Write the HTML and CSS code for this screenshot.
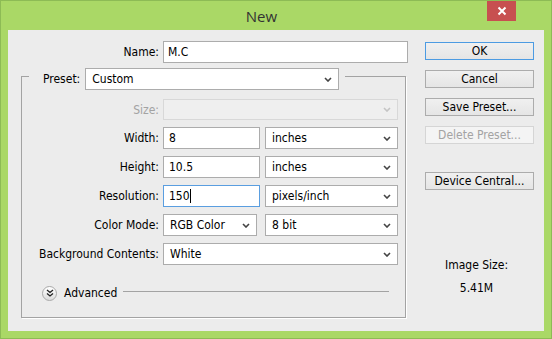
FILE: index.html
```html
<!DOCTYPE html>
<html>
<head>
    <meta name="viewport" content="width=device-width, initial-scale=1.0">
    <title>New</title>
    <link rel="stylesheet" href="styles.css">
</head>
<body>
    <div class="window">
        <div class="titlebar">
            <span class="title">New</span>
            <div class="close">
                <svg width="10" height="10" viewBox="0 0 10 10"><path d="M1.5 1.5 L8.5 8.5 M8.5 1.5 L1.5 8.5" stroke="#fff" stroke-width="2"/></svg>
            </div>
        </div>

        <div class="panel">
            <div class="main">
                <div class="row name-row">
                    <label>Name:</label>
                    <div class="field name">M.C</div>
                </div>

                <div class="group">
                    <div class="legend">
                        <label>Preset:</label>
                        <div class="select preset"><span>Custom</span><svg class="chev" width="8" height="5" viewBox="0 0 8 5"><path d="M1 1 L4 4 L7 1" fill="none" stroke="#444" stroke-width="1.6"/></svg></div>
                    </div>

                    <div class="row size-row">
                        <label class="disabled">Size:</label>
                        <div class="select full off"><span></span><svg class="chev" width="8" height="5" viewBox="0 0 8 5"><path d="M1 1 L4 4 L7 1" fill="none" stroke="#c4c4c4" stroke-width="1.6"/></svg></div>
                    </div>

                    <div class="row">
                        <label>Width:</label>
                        <div class="field small">8</div>
                        <div class="select unit"><span>inches</span><svg class="chev" width="8" height="5" viewBox="0 0 8 5"><path d="M1 1 L4 4 L7 1" fill="none" stroke="#444" stroke-width="1.6"/></svg></div>
                    </div>

                    <div class="row">
                        <label>Height:</label>
                        <div class="field small">10.5</div>
                        <div class="select unit"><span>inches</span><svg class="chev" width="8" height="5" viewBox="0 0 8 5"><path d="M1 1 L4 4 L7 1" fill="none" stroke="#444" stroke-width="1.6"/></svg></div>
                    </div>

                    <div class="row">
                        <label>Resolution:</label>
                        <div class="field small focus">150<span class="caret"></span></div>
                        <div class="select unit"><span>pixels/inch</span><svg class="chev" width="8" height="5" viewBox="0 0 8 5"><path d="M1 1 L4 4 L7 1" fill="none" stroke="#444" stroke-width="1.6"/></svg></div>
                    </div>

                    <div class="row">
                        <label>Color Mode:</label>
                        <div class="select mode"><span>RGB Color</span><svg class="chev" width="8" height="5" viewBox="0 0 8 5"><path d="M1 1 L4 4 L7 1" fill="none" stroke="#444" stroke-width="1.6"/></svg></div>
                        <div class="select unit"><span>8 bit</span><svg class="chev" width="8" height="5" viewBox="0 0 8 5"><path d="M1 1 L4 4 L7 1" fill="none" stroke="#444" stroke-width="1.6"/></svg></div>
                    </div>

                    <div class="row">
                        <label>Background Contents:</label>
                        <div class="select full"><span>White</span><svg class="chev" width="8" height="5" viewBox="0 0 8 5"><path d="M1 1 L4 4 L7 1" fill="none" stroke="#444" stroke-width="1.6"/></svg></div>
                    </div>

                    <div class="advanced">
                        <div class="toggle">
                            <svg width="8" height="8" viewBox="0 0 8 8"><path d="M1 1 L4 3.5 L7 1 M1 4.5 L4 7 L7 4.5" fill="none" stroke="#222" stroke-width="1.3"/></svg>
                        </div>
                        <span>Advanced</span>
                        <div class="rule"></div>
                    </div>
                </div>
            </div>

            <div class="side">
                <div class="btn default">OK</div>
                <div class="btn">Cancel</div>
                <div class="btn">Save Preset...</div>
                <div class="btn off">Delete Preset...</div>
                <div class="btn device">Device Central...</div>

                <div class="image-size">Image Size:</div>
                <div class="image-value">5.41M</div>
            </div>
        </div>
    </div>
</body>
</html>
```

FILE: styles.css
```css
body {
    margin: 0;
    padding: 0;
    font-family: "DejaVu Sans Condensed", "DejaVu Sans", sans-serif;
    font-stretch: condensed;
    font-size: 12px;
    color: #000;
}

.window {
    width: 552px;
    height: 339px;
    box-sizing: border-box;
    background-color: #aad866;
    border: 1px solid #8dbb55;
    display: flex;
    flex-direction: column;
    position: relative;
}

.titlebar {
    height: 29px;
    display: flex;
    align-items: center;
    justify-content: center;
    padding-right: 29px;
}

.title {
    font-family: "Open Sans", "Noto Sans", sans-serif;
    font-stretch: normal;
    font-size: 15px;
    color: #333;
}

.close {
    position: absolute;
    top: 0;
    right: 35px;
    width: 29px;
    height: 20px;
    background-color: #c75050;
    display: flex;
    align-items: center;
    justify-content: center;
}

.panel {
    flex: 1;
    margin: 0 7px 7px 7px;
    background-color: #ececec;
    display: flex;
}

.main {
    width: 402px;
}

.row {
    display: flex;
    align-items: center;
    margin-top: 7px;
}

.row label {
    width: 137px;
    text-align: right;
    margin-right: 4px;
    flex-shrink: 0;
}

.name-row {
    margin-top: 11px;
}

.name-row label {
    width: 151px;
}

.disabled {
    color: #a3a3a3;
}

.field,
.select {
    height: 22px;
    box-sizing: border-box;
    background-color: #fff;
    border: 1px solid #acacac;
    display: flex;
    align-items: center;
}

.field {
    padding-left: 5px;
}

.field.name {
    width: 245px;
    padding-left: 4px;
}

.field.small {
    width: 97px;
}

.field.focus {
    border-color: #5a9ee0;
}

.caret {
    display: inline-block;
    width: 1px;
    height: 14px;
    background-color: #000;
}

.select {
    padding-left: 6px;
    padding-right: 6px;
    justify-content: space-between;
}

.select.preset {
    width: 254px;
}

.select.unit {
    width: 133px;
    margin-left: 5px;
}

.select.mode {
    width: 94px;
    margin-right: 3px;
}

.select.full {
    width: 235px;
}

.select.off {
    height: 21px;
    background-color: #efefef;
    border-color: #d8d8d8;
}

.group {
    margin: 13px 0 0 13px;
    width: 385px;
    height: 242px;
    box-sizing: border-box;
    border: 1px solid #a3a3a3;
    box-shadow: 1px 1px 0 #fff;
}

.legend {
    display: flex;
    align-items: center;
    width: fit-content;
    margin: -9px 0 0 7px;
    padding: 0 6px 0 14px;
    background-color: #ececec;
}

.legend label {
    margin-right: 5px;
}

.size-row {
    margin-top: 9px;
}

.advanced {
    display: flex;
    align-items: center;
    margin: 21px 16px 0 20px;
    height: 14px;
}

.toggle {
    width: 13px;
    height: 13px;
    border-radius: 50%;
    border: 1px solid #a8a8a8;
    background: linear-gradient(#ffffff, #dcdcdc);
    display: flex;
    align-items: center;
    justify-content: center;
    margin-right: 7px;
}

.rule {
    flex: 1;
    height: 1px;
    background-color: #a3a3a3;
    margin-left: 6px;
    margin-top: -3px;
}

.side {
    margin-left: 15px;
    width: 109px;
    padding-top: 12px;
    display: flex;
    flex-direction: column;
}

.btn {
    height: 18px;
    box-sizing: border-box;
    border: 1px solid #acacac;
    background: linear-gradient(#f0f0f0, #e5e5e5);
    display: flex;
    align-items: center;
    justify-content: center;
    margin-bottom: 10px;
}

.btn.default {
    border-color: #4c9be2;
}

.btn.off {
    color: #a3a3a3;
    border-color: #d5d5d5;
    background: #f4f4f4;
}

.btn.device {
    margin-top: 18px;
}

.image-size {
    margin-top: 58px;
    text-align: center;
    line-height: 14px;
    padding-right: 6px;
}

.image-value {
    margin-top: 9px;
    text-align: center;
    line-height: 14px;
    padding-right: 6px;
}
```
